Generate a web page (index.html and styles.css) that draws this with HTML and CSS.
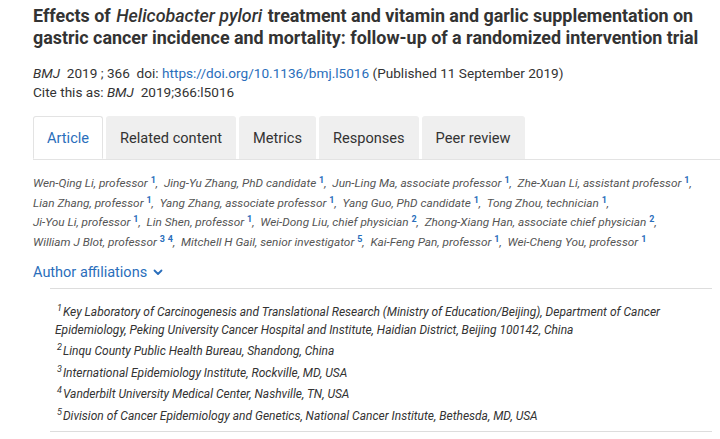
FILE: index.html
```html
<!DOCTYPE html>
<html>
<head>
<meta charset="utf-8">
<link rel="stylesheet" href="styles.css">
</head>
<body>
<div class="page">
  <h1 class="title">Effects of <em>Helicobacter pylori</em> treatment and vitamin and garlic supplementation on gastric cancer incidence and mortality: follow-up of a randomized intervention trial</h1>
  <div class="meta">
    <div><em>BMJ</em>&nbsp; 2019 ; 366 &nbsp;doi: <a href="#">https://doi.org/10.1136/bmj.l5016</a> (Published 11 September 2019)</div>
    <div>Cite this as: <em>BMJ</em>&nbsp; 2019;366:l5016</div>
  </div>
  <div class="tabs">
    <div class="tab active">Article</div>
    <div class="tab">Related content</div>
    <div class="tab">Metrics</div>
    <div class="tab">Responses</div>
    <div class="tab">Peer review</div>
  </div>
  <div class="authors">
    Wen-Qing Li, professor <sup>1</sup>,&nbsp; Jing-Yu Zhang, PhD candidate <sup>1</sup>,&nbsp; Jun-Ling Ma, associate professor <sup>1</sup>,&nbsp; Zhe-Xuan Li, assistant professor <sup>1</sup>,<br>
    Lian Zhang, professor <sup>1</sup>,&nbsp; Yang Zhang, associate professor <sup>1</sup>,&nbsp; Yang Guo, PhD candidate <sup>1</sup>,&nbsp; Tong Zhou, technician <sup>1</sup>,<br>
    Ji-You Li, professor <sup>1</sup>,&nbsp; Lin Shen, professor <sup>1</sup>,&nbsp; Wei-Dong Liu, chief physician <sup>2</sup>,&nbsp; Zhong-Xiang Han, associate chief physician <sup>2</sup>,<br>
    William J Blot, professor <sup>3</sup>&nbsp;<sup>4</sup>,&nbsp; Mitchell H Gail, senior investigator <sup>5</sup>,&nbsp; Kai-Feng Pan, professor <sup>1</sup>,&nbsp; Wei-Cheng You, professor <sup>1</sup>
  </div>
  <div class="aff-toggle">Author affiliations <svg class="chev" width="10" height="7" viewBox="0 0 10 7"><path d="M1.5 1.5 L5 5 L8.5 1.5" fill="none" stroke="#2a6ebb" stroke-width="1.8" stroke-linecap="round" stroke-linejoin="round"/></svg></div>
  <div class="affs">
    <div class="aff"><sup>1</sup>Key Laboratory of Carcinogenesis and Translational Research (Ministry of Education/Beijing), Department of Cancer Epidemiology, Peking University Cancer Hospital and Institute, Haidian District, Beijing 100142, China</div>
    <div class="aff"><sup>2</sup>Linqu County Public Health Bureau, Shandong, China</div>
    <div class="aff"><sup>3</sup>International Epidemiology Institute, Rockville, MD, USA</div>
    <div class="aff"><sup>4</sup>Vanderbilt University Medical Center, Nashville, TN, USA</div>
    <div class="aff"><sup>5</sup>Division of Cancer Epidemiology and Genetics, National Cancer Institute, Bethesda, MD, USA</div>
  </div>
</div>
</body>
</html>
```

FILE: styles.css
```css
html, body {
  margin: 0;
  padding: 0;
  background: #fff;
}
.page {
  padding: 5px 0 0 33px;
  font-family: Roboto, "Liberation Sans", sans-serif;
  color: #333;
}
.title {
  margin: 0;
  font-size: 17.9px;
  line-height: 22px;
  font-weight: 700;
  color: #333;
  max-width: 672px;
}
.title em {
  font-style: italic;
  font-weight: 500;
  margin: 0 1px;
}
.meta {
  margin-top: 15px;
  font-size: 13.6px;
  line-height: 19px;
  color: #333;
}
.meta a {
  color: #2a6ebb;
  text-decoration: none;
}
.tabs {
  display: flex;
  gap: 3px;
  margin-top: 14px;
  border-bottom: 1px solid #e3e3e3;
  height: 43px;
}
.tab {
  display: flex;
  align-items: center;
  padding: 0 14px;
  background: #efefef;
  border-radius: 3px 3px 0 0;
  font-size: 14.6px;
  color: #333;
  height: 43px;
}
.tab.active {
  background: #fff;
  color: #2a6ebb;
  border: 1px solid #e3e3e3;
  border-bottom: 1px solid #fff;
  padding: 0 13px;
  box-sizing: border-box;
  margin-bottom: -1px;
}
.authors {
  margin-top: 14px;
  font-size: 11.8px;
  line-height: 19.7px;
  font-style: italic;
  color: #555;
}
.authors sup, .aff-toggle {
  color: #2a6ebb;
}
.authors sup {
  font-style: normal;
  font-weight: 700;
  font-size: 9px;
  vertical-align: 4px;
  line-height: 0;
}
.aff-toggle {
  margin-top: 11px;
  font-size: 14.5px;
  line-height: 18px;
}
.chev {
  vertical-align: 1px;
  margin-left: 2px;
}
.affs {
  margin: 6px 8px 0 17px;
  border-top: 1px solid #ddd;
  border-bottom: 1px solid #ddd;
  padding: 14px 30px 6px 5px;
}
.aff {
  font-size: 12px;
  line-height: 18px;
  font-style: italic;
  color: #333;
  margin-bottom: 3.5px;
}
.aff:last-child {
  margin-bottom: 0;
}
.aff sup {
  font-size: 9px;
  vertical-align: 5px;
  line-height: 0;
  margin: 0 1px 0 2px;
}
```
